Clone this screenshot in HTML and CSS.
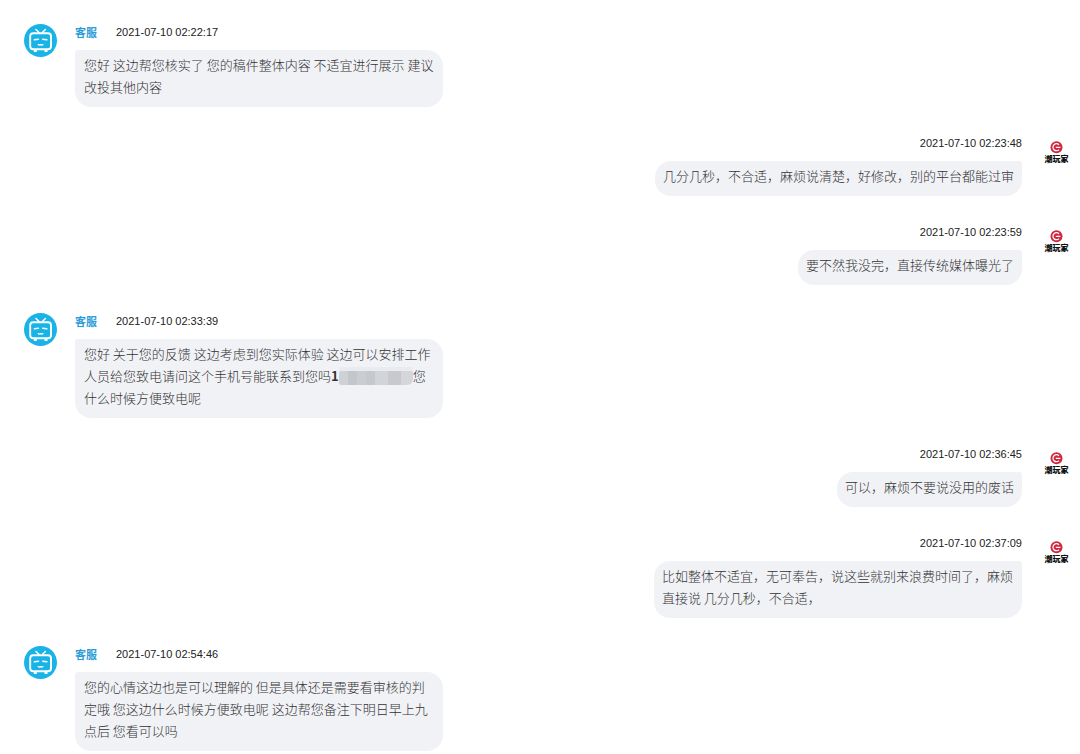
FILE: index.html
```html
<!DOCTYPE html>
<html lang="zh-CN">
<head>
    <meta charset="UTF-8">
    <meta name="viewport" content="width=device-width, initial-scale=1.0">
    <title>客服</title>
    <link rel="stylesheet" href="styles.css">
</head>
<body>
    <!-- shared avatars -->
    <svg class="defs" aria-hidden="true">
        <symbol id="service" viewBox="0 0 33 33">
            <circle cx="16.500" cy="16.500" r="16.500" fill="#19b3e8"/>
            <g fill="none" stroke="#fff" stroke-linecap="round" stroke-linejoin="round">
                <path d="M12 5.500l3 3M21.400 5.500l-3 3" stroke-width="1.600"/>
                <rect x="6.200" y="9.300" width="20.800" height="16" rx="3" stroke-width="1.900"/>
                <path d="M10.500 27h1.600M21.200 27h1.600" stroke-width="1.800"/>
                <path d="M10.400 15.800l4-.5M22.800 15.800l-4-.5" stroke-width="1.600"/>
                <path d="M14.200 20.600q1.200 1 2.400 0q1.200 1 2.400 0" stroke-width="1.300"/>
            </g>
        </symbol>
        <symbol id="user" viewBox="0 0 33 33">
            <circle cx="16.500" cy="12.200" r="6" fill="#d0273f"/>
            <path d="M19 9.800a3.500 3.500 0 1 0 0 4.800M15.800 12.300h4.600" fill="none" stroke="#fff" stroke-width="1.200"/>
            <text class="logo-text" x="16.500" y="26.500" text-anchor="middle">潮玩家</text>
        </symbol>
    </svg>

    <main class="chat">
        <div class="message">
            <svg class="avatar"><use href="#service"/></svg>
            <div class="content">
                <div class="info"><span class="name">客服</span><time>2021-07-10 02:22:17</time></div>
                <p class="bubble">您好 这边帮您核实了 您的稿件整体内容 不适宜进行展示 建议改投其他内容</p>
            </div>
        </div>

        <div class="message mine">
            <svg class="avatar"><use href="#user"/></svg>
            <div class="content">
                <div class="info"><time>2021-07-10 02:23:48</time></div>
                <p class="bubble">几分几秒，不合适，麻烦说清楚，好修改，别的平台都能过审</p>
            </div>
        </div>

        <div class="message mine">
            <svg class="avatar"><use href="#user"/></svg>
            <div class="content">
                <div class="info"><time>2021-07-10 02:23:59</time></div>
                <p class="bubble">要不然我没完，直接传统媒体曝光了</p>
            </div>
        </div>

        <div class="message">
            <svg class="avatar"><use href="#service"/></svg>
            <div class="content">
                <div class="info"><span class="name">客服</span><time>2021-07-10 02:33:39</time></div>
                <p class="bubble">您好 关于您的反馈 这边考虑到您实际体验 这边可以安排工作人员给您致电请问这个手机号能联系到您吗<b>1</b><span class="mosaic"></span>您什么时候方便致电呢</p>
            </div>
        </div>

        <div class="message mine">
            <svg class="avatar"><use href="#user"/></svg>
            <div class="content">
                <div class="info"><time>2021-07-10 02:36:45</time></div>
                <p class="bubble">可以，麻烦不要说没用的废话</p>
            </div>
        </div>

        <div class="message mine">
            <svg class="avatar"><use href="#user"/></svg>
            <div class="content">
                <div class="info"><time>2021-07-10 02:37:09</time></div>
                <p class="bubble">比如整体不适宜，无可奉告，说这些就别来浪费时间了，麻烦直接说 几分几秒，不合适，</p>
            </div>
        </div>

        <div class="message">
            <svg class="avatar"><use href="#service"/></svg>
            <div class="content">
                <div class="info"><span class="name">客服</span><time>2021-07-10 02:54:46</time></div>
                <p class="bubble">您的心情这边也是可以理解的 但是具体还是需要看审核的判定哦 您这边什么时候方便致电呢 这边帮您备注下明日早上九点后 您看可以吗</p>
            </div>
        </div>
    </main>
</body>
</html>
```
FILE: styles.css
```css
*{
    box-sizing: border-box;
}
body{
    margin: 0;
    background: #fff;
    font-family: "Noto Sans CJK SC", sans-serif;
}
.defs{
    position: absolute;
    width: 0;
    height: 0;
}
.logo-text{
    fill: #111;
    font-size: 8px;
    font-weight: 900;
}
.chat{
    display: flex;
    flex-direction: column;
    gap: 28px;
    padding: 24px 7px 2px 24px;
}
.message{
    display: flex;
    align-items: flex-start;
    gap: 18px;
}
.mine{
    flex-direction: row-reverse;
}
.avatar{
    width: 33px;
    height: 33px;
    flex: none;
}
.content{
    display: flex;
    flex-direction: column;
    align-items: flex-start;
}
.mine .content{
    align-items: flex-end;
}
.info{
    display: flex;
    gap: 19px;
    margin-bottom: 10px;
    font-size: 11px;
    line-height: 16px;
}
.name{
    color: #2b9bd7;
    font-weight: bold;
}
.info time{
    color: #222;
    font-family: "Liberation Sans", Arial, sans-serif;
}
.bubble{
    max-width: 368px;
    margin: 0;
    padding: 4px 8px 9px 9px;
    border-radius: 3px 16px 16px 16px;
    background: #f1f2f6;
    color: #333;
    font-size: 13px;
    font-weight: 300;
    line-height: 22px;
}
.mine .bubble{
    padding-left: 8px;
    border-radius: 16px 3px 16px 16px;
}
.bubble b{
    font-weight: bold;
}
.mosaic{
    display: inline-block;
    width: 74px;
    height: 14px;
    vertical-align: text-bottom;
    border-radius: 2px 2px 6px 2px;
    background: linear-gradient(90deg, #d0d1d5 0 12%, #c3c6cb 12% 24%, #cbcdd1 24% 36%, #c5c9cd 36% 48%, #d3d4d8 48% 66%, #c8c9ce 66% 84%, #d5d6da 84%);
    box-shadow: 0 -4px 0 #eaebf0;
}
```
